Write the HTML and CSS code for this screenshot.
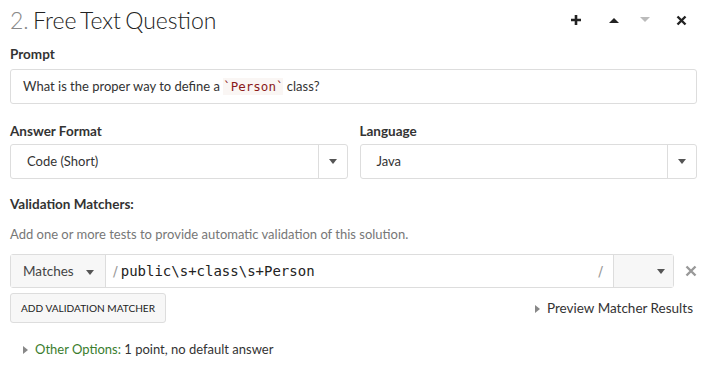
FILE: index.html
```html
<!DOCTYPE html>
<html lang="en">
<head>
    <meta charset="UTF-8">
    <title>Free Text Question</title>
    <link rel="stylesheet" href="styles.css">
</head>
<body>

<div class="question">
    <!-- Başlık -->
    <div class="question-head">
        <h1><span class="num">2.</span> Free Text Question</h1>
        <div class="tools">
            <span class="tool">
                <svg width="12" height="12" viewBox="0 0 12 12"><path d="M6 1v10M1 6h10" stroke="#222" stroke-width="2.6"/></svg>
            </span>
            <span class="tool up">
                <svg width="12" height="8" viewBox="0 0 12 8"><path d="M1 7L6 2l5 5z" fill="#222"/></svg>
            </span>
            <span class="tool down">
                <svg width="12" height="8" viewBox="0 0 12 8"><path d="M1 1l5 5 5-5z" fill="#bbb"/></svg>
            </span>
            <span class="tool close">
                <svg width="11" height="11" viewBox="0 0 11 11"><path d="M1.5 1.5l8 8M9.5 1.5l-8 8" stroke="#222" stroke-width="2.4"/></svg>
            </span>
        </div>
    </div>

    <label class="field-label">Prompt</label>
    <div class="text-input">What is the proper way to define a <code class="tick">`Person`</code> class?</div>

    <div class="two-col">
        <div class="col">
            <label class="field-label">Answer Format</label>
            <div class="select">
                <span class="select-value">Code (Short)</span>
                <span class="select-arrow"><span class="caret"></span></span>
            </div>
        </div>
        <div class="col">
            <label class="field-label">Language</label>
            <div class="select">
                <span class="select-value">Java</span>
                <span class="select-arrow"><span class="caret"></span></span>
            </div>
        </div>
    </div>

    <label class="field-label">Validation Matchers:</label>
    <p class="help">Add one or more tests to provide automatic validation of this solution.</p>

    <!-- Doğrulama satırı -->
    <div class="matcher-row">
        <div class="matcher">
            <span class="matcher-type">Matches <span class="caret"></span></span>
            <span class="matcher-input"><span class="slash">/</span>public\s+class\s+Person</span>
            <span class="slash end">/</span>
            <span class="matcher-flags"><span class="caret"></span></span>
        </div>
        <span class="remove">
            <svg width="12" height="12" viewBox="0 0 12 12"><path d="M1.5 1.5l9 9M10.5 1.5l-9 9" stroke="#999" stroke-width="2.4"/></svg>
        </span>
    </div>

    <div class="actions">
        <button class="btn">ADD VALIDATION MATCHER</button>
        <span class="preview"><span class="tri"></span>Preview Matcher Results</span>
    </div>

    <div class="other">
        <span class="tri"></span><span class="green">Other Options:</span> 1 point, no default answer
    </div>
</div>

</body>
</html>
```

FILE: styles.css
```css
body {
    font-family: Lato, "Open Sans", sans-serif;
    margin: 0;
    padding: 0;
    background-color: #fff;
    color: #333;
    font-size: 13px;
}

.question {
    padding: 0 14px 0 10px;
}

.question-head {
    display: flex;
    justify-content: space-between;
    align-items: center;
    height: 40px;
}

.question-head h1 {
    margin: 0;
    font-size: 23px;
    font-weight: 300;
    color: #222;
    word-spacing: -2px;
}

.question-head .num {
    color: #888;
}

.tools {
    display: flex;
    align-items: center;
    padding-right: 10px;
}

.tool {
    display: flex;
    width: 12px;
    justify-content: center;
}

.tool.up {
    margin-left: 26px;
}

.tool.down {
    margin-left: 19px;
}

.tool.close {
    margin-left: 24px;
}

.field-label {
    display: block;
    font-weight: bold;
    font-size: 13.5px;
    color: #333;
    line-height: 20px;
    margin: 4px 0 5px;
}

.text-input {
    border: 1px solid #ddd;
    border-radius: 3px;
    height: 33px;
    line-height: 33px;
    padding: 0 12px;
    color: #333;
}

.tick {
    font-family: "DejaVu Sans Mono", monospace;
    font-size: 12.5px;
    color: #8b1a1a;
    background-color: #faf6f4;
    padding: 1px 0;
}

.two-col {
    display: flex;
    gap: 12px;
    margin-top: 13px;
}

.col {
    flex: 1;
}

.col .field-label {
    margin-bottom: 3px;
}

.select {
    display: flex;
    border: 1px solid #ddd;
    border-radius: 3px;
    height: 33px;
}

.select-value {
    flex: 1;
    line-height: 33px;
    padding-left: 16px;
}

.select-arrow {
    width: 28px;
    border-left: 1px solid #ddd;
    display: flex;
    align-items: center;
    justify-content: center;
}

.caret {
    display: inline-block;
    width: 0;
    height: 0;
    border-left: 4.5px solid transparent;
    border-right: 4.5px solid transparent;
    border-top: 5px solid #555;
    vertical-align: middle;
}

.two-col + .field-label {
    margin-top: 15px;
}

.help {
    margin: 10px 0 10px;
    color: #777;
    line-height: 20px;
}

.matcher-row {
    display: flex;
    align-items: center;
    gap: 11px;
}

.matcher {
    flex: 1;
    display: flex;
    border: 1px solid #ddd;
    border-radius: 3px;
    height: 32px;
}

.matcher-type {
    width: 82px;
    padding-left: 12px;
    background-color: #f7f7f7;
    border-right: 1px solid #ddd;
    line-height: 32px;
    color: #444;
    font-size: 13.5px;
}

.matcher-type .caret {
    margin-left: 9px;
}

.matcher-input {
    flex: 1;
    line-height: 32px;
    padding-left: 7px;
    font-family: "DejaVu Sans Mono", monospace;
    font-size: 14px;
    color: #222;
}

.slash {
    color: #999;
    font-family: "DejaVu Sans", sans-serif;
    font-size: 14px;
    margin-right: 3px;
}

.slash.end {
    line-height: 32px;
    padding-right: 7px;
}

.matcher-flags {
    width: 60px;
    background-color: #f7f7f7;
    border-left: 1px solid #ddd;
    display: flex;
    align-items: center;
    justify-content: flex-end;
    padding-right: 8px;
    box-sizing: border-box;
}

.remove {
    display: flex;
    width: 12px;
    justify-content: center;
}

.actions {
    display: flex;
    justify-content: space-between;
    align-items: center;
    margin-top: 5px;
}

.btn {
    font-family: Lato, "Open Sans", sans-serif;
    font-size: 10.1px;
    color: #222;
    background-color: #f7f7f7;
    border: 1px solid #ddd;
    border-radius: 3px;
    height: 30px;
    padding: 0 10px;
}

.preview {
    color: #333;
    font-size: 13.5px;
    margin-right: 4px;
}

.tri {
    display: inline-block;
    width: 0;
    height: 0;
    border-top: 4.5px solid transparent;
    border-bottom: 4.5px solid transparent;
    border-left: 5px solid #888;
    margin-right: 7px;
    vertical-align: 0;
}

.other {
    margin-top: 16px;
    padding-left: 13px;
    line-height: 20px;
}

.green {
    color: #3a7d2e;
}
```
